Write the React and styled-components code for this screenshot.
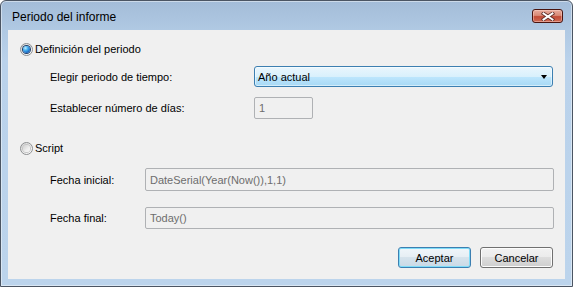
import React from "react";
import styled, { createGlobalStyle } from "styled-components";

const Global = createGlobalStyle`
  html, body { margin: 0; padding: 0; background: #ffffff; overflow: hidden; }
  #root { width: 573px; height: 287px; }
  * { box-sizing: border-box; }
`;

const Window = styled.div`
  width: 573px;
  height: 287px;
  border: 1px solid #4b5563;
  border-radius: 6px 6px 0 0;
  background: linear-gradient(to bottom, #a3bcd8 0px, #b0c9e3 29px, #bad2eb 60px, #bcd4ec 100%);
  box-shadow: inset 0 0 0 1px rgba(255, 255, 255, 0.45);
  display: flex;
  flex-direction: column;
  font-family: "Liberation Sans", Arial, sans-serif;
`;

const TitleBar = styled.div`
  height: 29px;
  display: flex;
  align-items: flex-start;
  justify-content: space-between;
  padding: 0 9px 0 11px;
`;

const Title = styled.div`
  margin-top: 9px;
  font-size: 12px;
  line-height: 14px;
  color: #000;
`;

const CloseButton = styled.div`
  margin-top: 8px;
  width: 31px;
  height: 14px;
  border: 1px solid #4a1510;
  border-radius: 3px;
  background: linear-gradient(to bottom, #e8ab9d 0%, #d98a77 45%, #c24b37 55%, #cd6a55 100%);
  box-shadow: inset 0 0 0 1px rgba(255, 220, 210, 0.45);
  display: flex;
  align-items: center;
  justify-content: center;
`;

const Client = styled.div`
  margin: 0 7px 7px;
  height: 249px;
  background: #f0f0f0;
  display: flex;
  flex-direction: column;
  padding: 0 12px;
  font-size: 11px;
  color: #000;
`;

const RadioRow = styled.label`
  margin-top: ${(p) => p.$top}px;
  height: 14px;
  display: flex;
  align-items: center;
  gap: 2px;
  line-height: 14px;
`;

const Radio = styled.span`
  position: relative;
  width: 13px;
  height: 13px;
  border-radius: 50%;
  border: 1px solid #8d8f91;
  background: linear-gradient(135deg, #d4d4d4 0%, #f4f4f4 70%, #ffffff 100%);
  flex: none;
  &::after {
    content: "";
    position: absolute;
    left: 2px;
    top: 2px;
    width: 7px;
    height: 7px;
    border-radius: 50%;
    background: ${(p) =>
      p.$checked
        ? "radial-gradient(circle at 35% 30%, #c6efff 0%, #45b0f0 35%, #1a68c2 70%, #0c3d7e 100%)"
        : "linear-gradient(135deg, #cfcfcf 0%, #eeeeee 60%, #f8f8f8 100%)"};
    box-shadow: ${(p) => (p.$checked ? "0 0 0 1px #1f3f6a" : "0 0 0 1px #c4c4c4")};
  }
`;

const FieldRow = styled.div`
  margin-top: ${(p) => p.$top}px;
  height: ${(p) => p.$h}px;
  display: grid;
  grid-template-columns: ${(p) => p.$label}px ${(p) => (p.$w ? `${p.$w}px` : "1fr")};
  align-items: center;
  padding-left: 30px;
`;

const Label = styled.span`
  line-height: 14px;
  white-space: nowrap;
`;

const Combo = styled.div`
  height: 100%;
  border: 1px solid #3c7fb1;
  border-radius: 3px;
  background: linear-gradient(to bottom, #eaf6fd 0%, #d9f0fc 50%, #bee6fd 50%, #a7d9f5 100%);
  box-shadow: inset 0 0 0 1px rgba(255, 255, 255, 0.5);
  display: flex;
  align-items: center;
  justify-content: space-between;
  padding: 0 5px 0 3px;
`;

const Arrow = styled.span`
  width: 0;
  height: 0;
  border-left: 3.5px solid transparent;
  border-right: 3.5px solid transparent;
  border-top: 4px solid #000;
`;

const TextBox = styled.div`
  height: 100%;
  border: 1px solid #afb1b4;
  border-radius: 2px;
  background: #f0f0f0;
  color: #6d6d6d;
  display: flex;
  align-items: center;
  padding-left: 4px;
  margin-right: ${(p) => (p.$wide ? "-1px" : "0")};
  white-space: nowrap;
`;

const ButtonRow = styled.div`
  margin-top: 18px;
  display: flex;
  justify-content: flex-end;
  gap: 9px;
`;

const Button = styled.div`
  width: 73px;
  height: 21px;
  border: 1px solid ${(p) => (p.$default ? "#3c7fb1" : "#707070")};
  border-radius: 3px;
  background: ${(p) =>
    p.$default
      ? "linear-gradient(to bottom, #f0f6fa 0%, #e6eef4 50%, #d6e3ec 50%, #c9d9e6 100%)"
      : "linear-gradient(to bottom, #f2f2f2 0%, #ebebeb 50%, #dddddd 50%, #cfcfcf 100%)"};
  box-shadow: inset 0 0 0 1px ${(p) => (p.$default ? "#7fdcf8" : "#fcfcfc")};
  display: flex;
  align-items: center;
  justify-content: center;
  line-height: 14px;
`;

function CloseGlyph() {
  return (
    <svg width="14" height="9" viewBox="0 0 14 9">
      <path d="M2.5 1.5 L11.5 7.5 M11.5 1.5 L2.5 7.5" stroke="#5b2a26" strokeWidth="3.6" strokeLinecap="square" />
      <path d="M2.5 1.5 L11.5 7.5 M11.5 1.5 L2.5 7.5" stroke="#ffffff" strokeWidth="2" strokeLinecap="square" />
    </svg>
  );
}

export default function App() {
  return (
    <>
      <Global />
      <Window>
        <TitleBar>
          <Title>Periodo del informe</Title>
          <CloseButton>
            <CloseGlyph />
          </CloseButton>
        </TitleBar>
        <Client>
          <RadioRow $top={12}>
            <Radio $checked />
            <span>Definición del periodo</span>
          </RadioRow>
          <FieldRow $top={10} $h={21} $label={204}>
            <Label>Elegir periodo de tiempo:</Label>
            <Combo>
              <span>Año actual</span>
              <Arrow />
            </Combo>
          </FieldRow>
          <FieldRow $top={10} $h={22} $label={204} $w={59}>
            <Label>Establecer número de días:</Label>
            <TextBox>1</TextBox>
          </FieldRow>
          <RadioRow $top={22}>
            <Radio />
            <span>Script</span>
          </RadioRow>
          <FieldRow $top={13} $h={23} $label={95}>
            <Label>Fecha inicial:</Label>
            <TextBox $wide>DateSerial(Year(Now()),1,1)</TextBox>
          </FieldRow>
          <FieldRow $top={16} $h={22} $label={95}>
            <Label>Fecha final:</Label>
            <TextBox $wide>Today()</TextBox>
          </FieldRow>
          <ButtonRow>
            <Button $default>Aceptar</Button>
            <Button>Cancelar</Button>
          </ButtonRow>
        </Client>
      </Window>
    </>
  );
}
